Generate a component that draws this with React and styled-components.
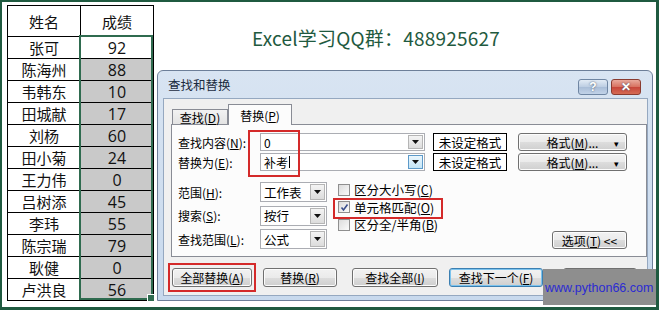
import React from "react";
import styled, { createGlobalStyle } from "styled-components";

const GlobalStyle = createGlobalStyle`
  html, body {
    margin: 0;
    padding: 0;
    background: #fff;
    overflow: hidden;
  }
`;

const CJK = `"Noto Sans CJK SC", "Noto Sans", sans-serif`;

const Frame = styled.div`
  position: relative;
  width: 659px;
  height: 310px;
  box-sizing: border-box;
  border: 2px solid #1f5a40;
  border-right-width: 3px;
  border-bottom-width: 3px;
  background: #fff;
  display: flex;
  padding: 3px 0 0 5px;
  overflow: hidden;
  font-family: ${CJK};
`;

/* ---------- sheet ---------- */

const SheetWrap = styled.div`
  position: relative;
  align-self: flex-start;
`;

const Sheet = styled.div`
  display: grid;
  grid-template-columns: 73px 73px;
  border-left: 1px solid #000;
  border-top: 1px solid #000;
`;

const Cell = styled.div`
  box-sizing: border-box;
  height: ${props => (props.$head ? "31px" : "22px")};
  border-right: 1px solid #000;
  border-bottom: 1px solid #000;
  display: flex;
  align-items: center;
  justify-content: center;
  background: ${props => (props.$shaded ? "#c9c9c9" : "#fff")};
  color: #111;
  font-size: ${props => (props.$num ? "16px" : "15px")};
  font-family: ${props => (props.$num ? `"Open Sans", "Liberation Sans", sans-serif` : CJK)};
`;

const Selection = styled.div`
  position: absolute;
  left: 72px;
  top: 30px;
  width: 74px;
  height: 265px;
  box-sizing: border-box;
  border: 2px solid #2f6b4f;
  pointer-events: none;
`;

const Handle = styled.div`
  position: absolute;
  right: -4px;
  bottom: -4px;
  width: 6px;
  height: 6px;
  background: #2f6b4f;
  border: 1px solid #fff;
`;

/* ---------- right side ---------- */

const Side = styled.div`
  display: flex;
  flex-direction: column;
  margin-left: 3px;
`;

const Title = styled.div`
  height: 65px;
  display: flex;
  align-items: center;
  padding-left: 95px;
  color: #1f5a40;
  font-size: 19px;
  letter-spacing: 0.2px;
`;

const Dialog = styled.div`
  width: 496px;
  height: 231px;
  box-sizing: border-box;
  border: 1px solid #6d7f99;
  border-radius: 6px 6px 0 0;
  background: linear-gradient(#d8e4f2, #c8d9ed);
  padding: 0 4px 4px 5px;
  display: flex;
  flex-direction: column;
  font-size: 12px;
  color: #000;
`;

const TitleBar = styled.div`
  height: 27px;
  display: flex;
  align-items: center;
  padding: 0 7px 0 5px;
  color: #1b2b40;
  font-size: 12.5px;
`;

const Caption = styled.div`
  margin-left: auto;
  align-self: flex-start;
  margin-top: 8px;
  display: flex;
  gap: 3px;
`;

const CapButton = styled.div`
  width: 30px;
  height: 16px;
  box-sizing: border-box;
  border: 1px solid ${props => (props.$close ? "#8a3b30" : "#6f86a3")};
  border-radius: 3px;
  background: ${props =>
    props.$close
      ? "linear-gradient(#e9a99c, #d7705f 50%, #c7453a 51%, #d56b54)"
      : "linear-gradient(#e2ebf5, #bccde2 50%, #a9bdd7 51%, #c2d3e8)"};
  display: flex;
  align-items: center;
  justify-content: center;
  color: #fff;
  font-family: "Liberation Sans", sans-serif;
  font-weight: bold;
  font-size: 12px;
  text-shadow: 0 0 2px #3a4a60;
`;

const Client = styled.div`
  flex: 1;
  background: #f0f0f0;
  border: 1px solid #95a8c0;
  padding: 6px 0 0 7px;
  display: flex;
  flex-direction: column;
`;

const TabRow = styled.div`
  display: flex;
  align-items: flex-end;
  height: 20px;
  margin-bottom: -1px;
  position: relative;
  z-index: 1;
`;

const Tab = styled.div`
  box-sizing: border-box;
  width: ${props => (props.$active ? "64px" : "56px")};
  height: ${props => (props.$active ? "21px" : "16px")};
  margin-left: ${props => (props.$active ? "0" : "1px")};
  border: 1px solid #898c95;
  border-bottom: ${props => (props.$active ? "none" : "1px solid #898c95")};
  background: ${props => (props.$active ? "#fcfcfc" : "linear-gradient(#f2f2f2, #e3e3e3)")};
  display: flex;
  align-items: center;
  justify-content: center;
  padding-top: ${props => (props.$active ? "0" : "1px")};
`;

const Panel = styled.div`
  width: 476px;
  height: 133px;
  box-sizing: border-box;
  border: 1px solid #898c95;
  background: #fcfcfc;
  padding: 8px 0 0 6px;
  display: flex;
  flex-direction: column;
`;

const Row = styled.div`
  display: flex;
  align-items: center;
  height: ${props => props.$h || "18px"};
  margin-bottom: ${props => props.$mb || "2px"};
`;

const Label = styled.div`
  width: 82px;
  white-space: nowrap;
`;

const Combo = styled.div`
  box-sizing: border-box;
  width: ${props => props.$w};
  height: ${props => props.$h || "18px"};
  border: 1px solid #abadb3;
  background: #fff;
  display: flex;
  align-items: center;
  padding-left: 3px;
  font-size: ${props => props.$fs || "12px"};
`;

const Caret = styled.span`
  display: inline-block;
  width: 1px;
  height: 12px;
  background: #000;
  margin-left: 1px;
`;

const Arrow = styled.div`
  margin-left: auto;
  width: 15px;
  height: calc(100% - 2px);
  margin-right: 1px;
  box-sizing: border-box;
  border: 1px solid ${props => (props.$hot ? "#5d9ac9" : "#b5b5b5")};
  background: ${props =>
    props.$hot ? "linear-gradient(#eaf6fd, #c4e5f6)" : "linear-gradient(#f4f4f4, #dcdcdc)"};
  display: flex;
  align-items: center;
  justify-content: center;
`;

const FormatBox = styled.div`
  box-sizing: border-box;
  margin-left: 8px;
  width: 74px;
  height: 18px;
  border: 1px solid #000;
  background: #fff;
  display: flex;
  align-items: center;
  justify-content: center;
  font-size: 12.5px;
`;

const Button = styled.div`
  box-sizing: border-box;
  width: ${props => props.$w};
  height: ${props => props.$h || "19px"};
  margin-left: ${props => props.$ml || "0"};
  border: 1px solid ${props => (props.$focus ? "#3c7fb1" : "#707070")};
  border-radius: 3px;
  background: linear-gradient(#f2f2f2, #ebebeb 50%, #dddddd 51%, #cfcfcf);
  box-shadow: inset 0 0 0 1px ${props => (props.$focus ? "#7bc3ee" : "#fcfcfc")};
  display: flex;
  align-items: center;
  justify-content: center;
  position: relative;
  white-space: nowrap;
`;

const Drop = styled.span`
  position: absolute;
  right: 7px;
  top: 3px;
  font-size: 9px;
`;

const Section = styled.div`
  display: flex;
  margin-top: 9px;
`;

const Stack = styled.div`
  display: flex;
  flex-direction: column;
  gap: ${props => props.$gap || "3.5px"};
  margin-left: ${props => props.$ml || "0"};
  margin-top: ${props => props.$mt || "0"};
`;

const CheckRow = styled.div`
  display: flex;
  align-items: center;
  height: 17.5px;
  font-size: 12.5px;
`;

const Box = styled.div`
  box-sizing: border-box;
  width: 12px;
  height: 12px;
  border: 1px solid #8f8f8f;
  background: linear-gradient(135deg, #dcdcdc, #fbfbfb);
  margin-right: 4px;
  display: flex;
  align-items: center;
  justify-content: center;
`;

const Options = styled(Button)`
  margin-left: auto;
  margin-right: 19px;
  align-self: flex-end;
`;

const Buttons = styled.div`
  display: flex;
  margin-top: 11px;
  margin-left: 1px;
`;

/* ---------- overlays ---------- */

const Mark = styled.div`
  position: absolute;
  left: ${props => props.$x}px;
  top: ${props => props.$y}px;
  width: ${props => props.$w}px;
  height: ${props => props.$h}px;
  box-sizing: border-box;
  border: 2px solid #d42a2a;
  pointer-events: none;
`;

const Watermark = styled.div`
  position: absolute;
  left: 541px;
  top: 267px;
  width: 114px;
  height: 36px;
  background: #8e8e8e;
  color: #2b2bd2;
  font-family: "Liberation Sans", sans-serif;
  font-size: 12.5px;
  display: flex;
  align-items: center;
  padding: 2px 0 0 2px;
  box-sizing: border-box;
`;

const names = ["张可", "陈海州", "韦韩东", "田城献", "刘杨", "田小菊", "王力伟", "吕树添", "李玮", "陈宗瑞", "耿健", "卢洪良"];
const scores = [92, 88, 10, 17, 60, 24, 0, 45, 55, 79, 0, 56];

const Tri = () => (
  <svg width="7" height="4" viewBox="0 0 7 4">
    <polygon points="0,0 7,0 3.5,4" fill="#111" />
  </svg>
);

const Tick = () => (
  <svg width="9" height="9" viewBox="0 0 9 9">
    <path d="M1.5 4.5 L3.5 7 L7.5 1.5" stroke="#3a4f8c" strokeWidth="1.6" fill="none" />
  </svg>
);

const M = ({ k }) => <u>{k}</u>;

export default function App() {
  return (
    <>
      <GlobalStyle />
      <Frame>
        <SheetWrap>
          <Sheet>
            <Cell $head>姓名</Cell>
            <Cell $head>成绩</Cell>
            {names.map((n, i) => (
              <React.Fragment key={n}>
                <Cell>{n}</Cell>
                <Cell $num $shaded={i > 0}>{scores[i]}</Cell>
              </React.Fragment>
            ))}
          </Sheet>
          <Selection>
            <Handle />
          </Selection>
        </SheetWrap>

        <Side>
          <Title>Excel学习QQ群：488925627</Title>
          <Dialog>
            <TitleBar>
              查找和替换
              <Caption>
                <CapButton>?</CapButton>
                <CapButton $close>✕</CapButton>
              </Caption>
            </TitleBar>
            <Client>
              <TabRow>
                <Tab>查找(<M k="D" />)</Tab>
                <Tab $active>替换(<M k="P" />)</Tab>
              </TabRow>
              <Panel>
                <Row>
                  <Label>查找内容(<M k="N" />):</Label>
                  <Combo $w="165px">
                    0
                    <Arrow><Tri /></Arrow>
                  </Combo>
                  <FormatBox>未设定格式</FormatBox>
                  <Button $w="109px" $h="18px" $ml="11px">
                    格式(<M k="M" />)...
                    <Drop>▾</Drop>
                  </Button>
                </Row>
                <Row>
                  <Label>替换为(<M k="E" />):</Label>
                  <Combo $w="165px">
                    补考<Caret />
                    <Arrow $hot><Tri /></Arrow>
                  </Combo>
                  <FormatBox>未设定格式</FormatBox>
                  <Button $w="109px" $h="18px" $ml="11px">
                    格式(<M k="M" />)...
                    <Drop>▾</Drop>
                  </Button>
                </Row>
                <Section>
                  <Stack>
                    <Row $h="20px" $mb="0">
                      <Label>范围(<M k="H" />):</Label>
                      <Combo $w="67px" $h="20px" $fs="12.5px">工作表<Arrow><Tri /></Arrow></Combo>
                    </Row>
                    <Row $h="20px" $mb="0">
                      <Label>搜索(<M k="S" />):</Label>
                      <Combo $w="67px" $h="20px" $fs="12.5px">按行<Arrow><Tri /></Arrow></Combo>
                    </Row>
                    <Row $h="20px" $mb="0">
                      <Label>查找范围(<M k="L" />):</Label>
                      <Combo $w="67px" $h="20px" $fs="12.5px">公式<Arrow><Tri /></Arrow></Combo>
                    </Row>
                  </Stack>
                  <Stack $ml="11px" $mt="-1px" $gap="0">
                    <CheckRow><Box />区分大小写(<M k="C" />)</CheckRow>
                    <CheckRow><Box><Tick /></Box>单元格匹配(<M k="O" />)</CheckRow>
                    <CheckRow><Box />区分全/半角(<M k="B" />)</CheckRow>
                  </Stack>
                  <Options $w="75px" $h="18px">选项(<M k="T" />) &lt;&lt;</Options>
                </Section>
              </Panel>
              <Buttons>
                <Button $w="80px">全部替换(<M k="A" />)</Button>
                <Button $w="74px" $ml="11px">替换(<M k="R" />)</Button>
                <Button $w="86px" $ml="15px">查找全部(<M k="I" />)</Button>
                <Button $w="94px" $ml="11px" $focus>查找下一个(<M k="F" />)</Button>
                <Button $w="74px" $ml="20px" />
              </Buttons>
            </Client>
          </Dialog>
        </Side>

        <Mark $x={246} $y={128} $w={52} $h={47} />
        <Mark $x={331} $y={196} $w={110} $h={21} />
        <Mark $x={166} $y={261} $w={88} $h={29} />
        <Watermark>www.python66.com</Watermark>
      </Frame>
    </>
  );
}
